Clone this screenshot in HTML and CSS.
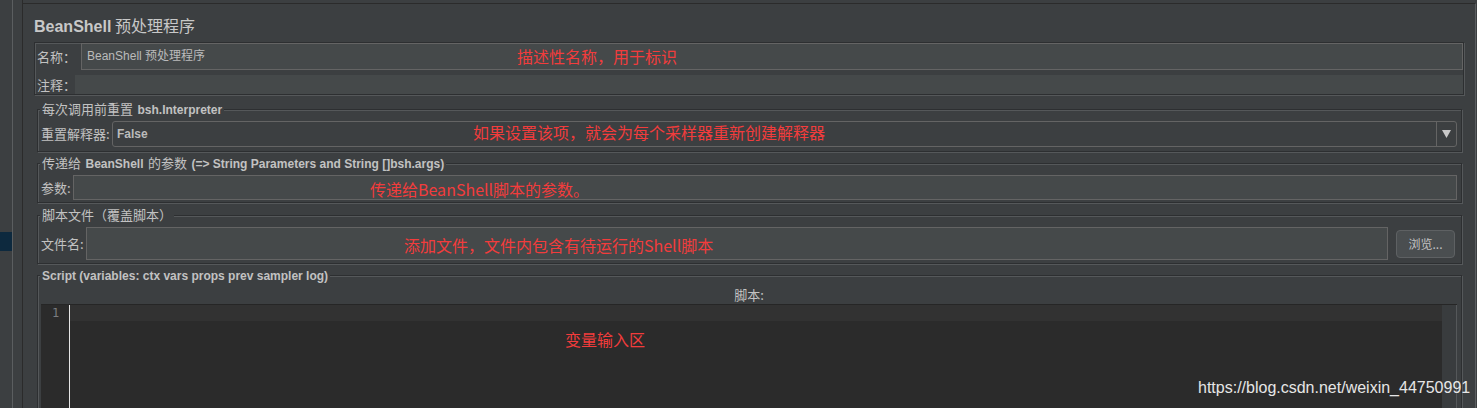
FILE: index.html
```html
<!DOCTYPE html>
<html lang="zh-CN">
<head>
<meta charset="utf-8">
<title>BeanShell 预处理程序</title>
<link rel="stylesheet" href="styles.css">
</head>
<body>
<div class="app">
  <div class="tree"><div class="tree-sel"></div></div>
  <div class="split"></div>
  <div class="main">
    <h1 class="title"><span class="lat">BeanShell</span> 预处理程序</h1>

    <div class="namebox">
      <div class="row name-row">
        <label class="lbl lbl-name">名称：</label>
        <div class="input input-name">BeanShell 预处理程序</div>
      </div>
      <div class="row comment-row">
        <label class="lbl lbl-comment">注释：</label>
        <div class="input-flat"></div>
      </div>
    </div>

    <fieldset class="group g-reset">
      <legend><span class="cjk">每次调用前重置</span> <span class="lat">bsh.Interpreter</span></legend>
      <div class="row">
        <label class="lbl lbl-reset">重置解释器:</label>
        <div class="combo">
          <span class="combo-val">False</span>
          <span class="combo-arrow"><svg width="9" height="8" viewBox="0 0 9 8"><path d="M0 0H9L4.5 8Z" fill="#c8c8c8"/></svg></span>
        </div>
      </div>
    </fieldset>

    <fieldset class="group g-params">
      <legend><span class="cjk">传递给</span> <span class="lat">BeanShell</span> <span class="cjk">的参数</span> <span class="lat">(=&gt; String Parameters and String []bsh.args)</span></legend>
      <div class="row">
        <label class="lbl lbl-params">参数:</label>
        <div class="input input-params"></div>
      </div>
    </fieldset>

    <fieldset class="group g-file">
      <legend><span class="cjk">脚本文件（覆盖脚本）</span></legend>
      <div class="row">
        <label class="lbl lbl-file">文件名:</label>
        <div class="input input-file"></div>
        <button class="btn">浏览...</button>
      </div>
    </fieldset>

    <fieldset class="group g-script">
      <legend><span class="lat">Script (variables: ctx vars props prev sampler log)</span></legend>
      <div class="script-label">脚本:</div>
      <div class="editor">
        <div class="gutter"><span class="ln">1</span></div>
        <div class="code"><div class="curline"></div></div>
        <div class="vscroll"></div>
      </div>
    </fieldset>
  </div>
</div>

<div class="note note-name">描述性名称，用于标识</div>
<div class="note note-reset">如果设置该项，就会为每个采样器重新创建解释器</div>
<div class="note note-params">传递给BeanShell脚本的参数。</div>
<div class="note note-file">添加文件，文件内包含有待运行的Shell脚本</div>
<div class="note note-script">变量输入区</div>
<div class="watermark">https://blog.csdn.net/weixin_44750991</div>
</body>
</html>
```

FILE: styles.css
```css
* { box-sizing: border-box; }
html, body { margin: 0; padding: 0; }
body {
  width: 1477px;
  height: 408px;
  overflow: hidden;
  position: relative;
  background: #3c3f41;
  color: #bbbbbb;
  font-family: "Liberation Sans", "Noto Sans CJK SC", sans-serif;
}
.app { display: flex; height: 408px; }

.tree { width: 12px; flex: none; padding-top: 232px; }
.tree-sel { height: 19px; background: #0d293e; }
.split {
  width: 11px; flex: none;
  border-left: 1px solid #5b5e60;
  border-right: 1px solid #2b2b2b;
}
.main {
  flex: none;
  width: 1453px;
  margin-top: 3px;
  border-top: 1px solid #2b2b2b;
  border-right: 1px solid #5b5e60;
  padding: 11px 11px 0 11px;
}

.title {
  margin: 0;
  height: 20px;
  line-height: 20px;
  font-size: 16px;
  font-weight: normal;
  color: #c8c8c8;
  font-family: "Noto Sans CJK SC", sans-serif;
  white-space: nowrap;
}
.title .lat { font-family: "Liberation Sans", sans-serif; font-weight: bold; }

.namebox {
  margin-top: 7px;
  padding-left: 1px;
  border: 1px solid #2d2f31;
  box-shadow: inset 1px 1px 0 #55585a, 1px 1px 0 #55585a;
}
.row { display: flex; align-items: center; }
.lbl {
  flex: none;
  font-family: "Noto Sans CJK SC", sans-serif;
  font-size: 13px;
  line-height: 16px;
  color: #c2c2c2;
  white-space: nowrap;
}
.lbl-name { width: 45px; padding-left: 1px; }
.lbl-comment { width: 39px; padding-left: 1px; }
.lbl-reset { width: 71px; }
.lbl-params { width: 32px; }
.lbl-file { width: 45px; }

.input {
  flex: 1;
  background: #45494a;
  border: 1px solid #646464;
}
.name-row { height: 27px; }
.input-name {
  height: 27px;
  padding-left: 5px;
  font-size: 12px;
  line-height: 25px;
  color: #bbbbbb;
}
.comment-row { height: 19px; margin-top: 5px; }
.input-flat { flex: 1; height: 19px; background: #45494a; }

.group {
  min-width: 0;
  margin: 6px 2px 0 3px;
  padding: 4px 4px 4px 3px;
  border: 1px solid #2d2f31;
  box-shadow: inset 1px 1px 0 #55585a, 1px 1px 0 #55585a;
}
.group legend {
  margin-left: -1px;
  padding: 0 2px;
  height: 16px;
  line-height: 16px;
  background: #3c3f41;
  white-space: nowrap;
  color: #c2c2c2;
}
.group legend .cjk { font-family: "Noto Sans CJK SC", sans-serif; font-size: 13px; }
.group legend .lat {
  font-family: "Liberation Sans", sans-serif;
  font-size: 12px;
  font-weight: bold;
}
.g-params { margin-top: 3px; padding-bottom: 2px; }
.g-file { margin-top: 4px; padding-bottom: 3px; }
.g-script { margin-top: 3px; padding-bottom: 0; }

.combo {
  flex: 1;
  height: 26px;
  display: flex;
  align-items: stretch;
  border: 1px solid #646464;
  border-radius: 3px;
  background: #3c3f41;
}
.combo-val {
  flex: 1;
  padding-left: 4px;
  font-size: 12px;
  font-weight: bold;
  line-height: 24px;
  color: #bbbbbb;
}
.combo-arrow {
  width: 20px;
  border-left: 1px solid #646464;
  display: flex;
  align-items: center;
  justify-content: center;
}

.input-params { height: 25px; }
.input-file { height: 33px; }
.btn {
  flex: none;
  width: 59px;
  height: 28px;
  margin: 0 2px 0 8px;
  padding: 0;
  background: #4a4e50;
  border: 1px solid #5e6163;
  border-radius: 4px;
  color: #c2c2c2;
  font-family: "Noto Sans CJK SC", sans-serif;
  font-size: 12px;
}

.script-label {
  height: 17px;
  line-height: 16px;
  text-align: center;
  font-family: "Noto Sans CJK SC", sans-serif;
  font-size: 13px;
  color: #c2c2c2;
}
.editor {
  display: flex;
  height: 130px;
  background: #2b2b2b;
  border-top: 1px solid #262626;
}
.gutter {
  width: 28px;
  flex: none;
  padding-left: 11px;
}
.ln {
  display: block;
  height: 16px;
  line-height: 16px;
  font-family: "DejaVu Sans Mono", monospace;
  font-size: 12px;
  color: #7a7d80;
}
.code { flex: 1; border-left: 1px solid #e6e6e6; }
.curline { height: 16px; background: #323232; }
.vscroll {
  width: 15px;
  flex: none;
  background: #393c3e;
  border-right: 1px solid #55585a;
}

.note {
  position: absolute;
  color: #f23c3c;
  font-family: "Noto Sans CJK SC", sans-serif;
  font-size: 16px;
  line-height: 20px;
  white-space: nowrap;
}
.note-name { left: 517px; top: 46px; }
.note-reset { left: 473px; top: 122px; }
.note-params { left: 370px; top: 179px; }
.note-file { left: 404px; top: 235px; }
.note-script { left: 565px; top: 329px; }

.watermark {
  position: absolute;
  left: 1198px;
  top: 378px;
  font-family: "Liberation Sans", sans-serif;
  font-size: 16px;
  line-height: 19px;
  color: #e6e6e6;
  white-space: nowrap;
}
```
